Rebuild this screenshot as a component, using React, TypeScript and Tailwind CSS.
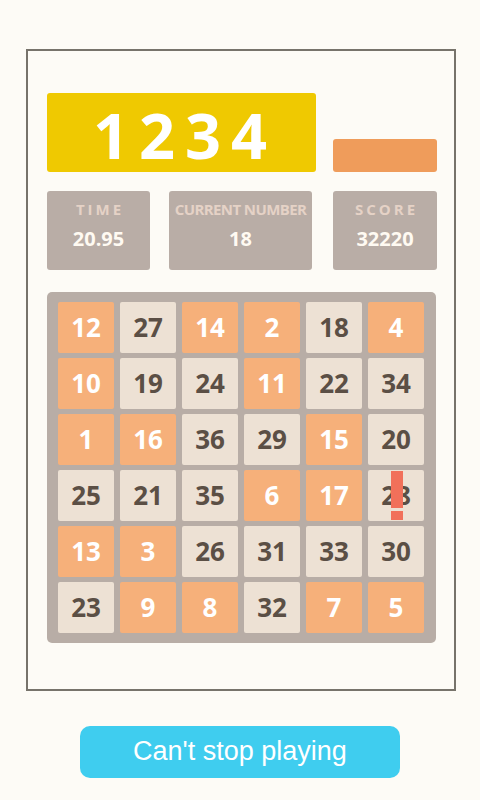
import React from "react";

type Tile = { n: number; o: boolean };

const rows: Tile[][] = [
  [{ n: 12, o: true }, { n: 27, o: false }, { n: 14, o: true }, { n: 2, o: true }, { n: 18, o: false }, { n: 4, o: true }],
  [{ n: 10, o: true }, { n: 19, o: false }, { n: 24, o: false }, { n: 11, o: true }, { n: 22, o: false }, { n: 34, o: false }],
  [{ n: 1, o: true }, { n: 16, o: true }, { n: 36, o: false }, { n: 29, o: false }, { n: 15, o: true }, { n: 20, o: false }],
  [{ n: 25, o: false }, { n: 21, o: false }, { n: 35, o: false }, { n: 6, o: true }, { n: 17, o: true }, { n: 28, o: false }],
  [{ n: 13, o: true }, { n: 3, o: true }, { n: 26, o: false }, { n: 31, o: false }, { n: 33, o: false }, { n: 30, o: false }],
  [{ n: 23, o: false }, { n: 9, o: true }, { n: 8, o: true }, { n: 32, o: false }, { n: 7, o: true }, { n: 5, o: true }],
];

const font = { fontFamily: '"Open Sans", "Noto Sans", sans-serif' };

function Stat({ label, value, w, tight }: { label: string; value: string; w: string; tight?: boolean }) {
  return (
    <div className={`${w} h-[79px] bg-[#b9ada6] rounded-[3px] flex flex-col items-center pt-[8px]`}>
      <div
        className={
          tight
            ? "text-[15px] font-bold text-[#e5d2c6] tracking-[-0.6px] leading-[20px]"
            : "text-[15px] font-bold text-[#e5d2c6] tracking-[3px] leading-[20px] pl-[3px]"
        }
      >
        {label}
      </div>
      <div className="text-[20px] font-bold text-[#fffaf2] leading-[26px] mt-[7px]">{value}</div>
    </div>
  );
}

export default function App() {
  return (
    <div className="w-[480px] h-[800px] bg-[#fdfbf6] pt-[49px]" style={font}>
      <div className="ml-[26px] w-[430px] h-[642px] border-2 border-[#77736b] pt-[42px] pl-[19px]">
        <div className="w-[390px] flex items-end gap-[17px]">
          <div className="w-[269px] h-[79px] bg-[#efc901] rounded-[3px] flex items-center justify-center">
            <span className="text-[63px] font-bold text-white leading-none tracking-[10px] pl-[7px] pt-[3px]">1234</span>
          </div>
          <div className="w-[104px] h-[33px] bg-[#ef9c5b] rounded-[3px]" />
        </div>
        <div className="w-[390px] flex mt-[19px]">
          <Stat label="TIME" value="20.95" w="w-[103px]" />
          <div className="w-[19px]" />
          <Stat label="CURRENT NUMBER" value="18" w="w-[143px]" tight />
          <div className="w-[21px]" />
          <Stat label="SCORE" value="32220" w="w-[104px]" />
        </div>
        <div className="mt-[22px] w-[389px] bg-[#b8ada6] rounded-[5px] pt-[10px] pb-[10px] pl-[11px] pr-[11px] flex flex-col gap-[5px]">
          {rows.map((r, i) => (
            <div key={i} className="flex gap-[6px]">
              {r.map((t, j) => (
                <div
                  key={j}
                  className={
                    t.o
                      ? "relative w-[56px] h-[51px] rounded-[2px] bg-[#f6b07a] text-white flex items-center justify-center text-[26px] font-bold"
                      : "relative w-[56px] h-[51px] rounded-[2px] bg-[#ede1d4] text-[#5b4f45] flex items-center justify-center text-[26px] font-bold"
                  }
                >
                  {t.n}
                  {i === 3 && j === 5 && (
                    <>
                      <div className="absolute left-[23px] top-[1px] w-[12px] h-[37px] bg-[#f1705a]" />
                      <div className="absolute left-[23px] top-[41px] w-[12px] h-[9px] bg-[#f1705a]" />
                    </>
                  )}
                </div>
              ))}
            </div>
          ))}
        </div>
      </div>
      <div className="flex justify-center mt-[35px]">
        <div
          className="w-[320px] h-[52px] bg-[#3fcdef] rounded-[10px] flex items-center justify-center text-white text-[27px] leading-none pb-[2px]"
          style={{ fontFamily: '"Liberation Sans", Arial, sans-serif' }}
        >
          Can't stop playing
        </div>
      </div>
    </div>
  );
}
